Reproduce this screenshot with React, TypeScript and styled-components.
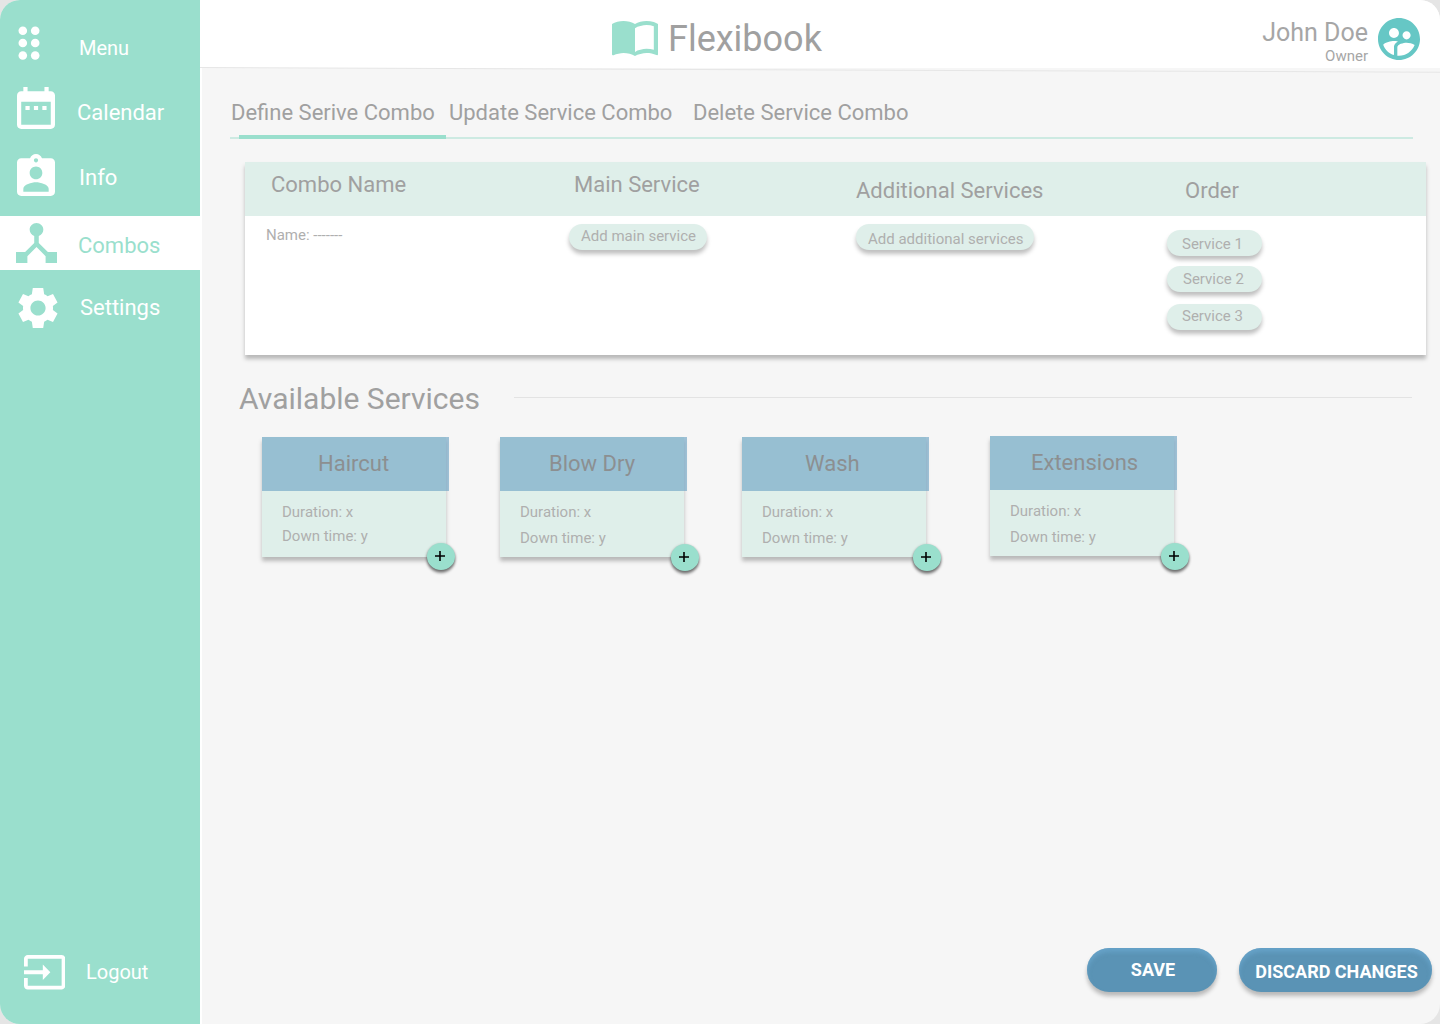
import React from "react";
import styled, { createGlobalStyle } from "styled-components";

const mint = "#9adfcd";
const paleMint = "#dfefea";
const canvas = "#f6f6f6";
const grey = "#a0a0a0";
const softGrey = "#afafaf";
const dropShadow = "0 4px 4px rgba(0, 0, 0, 0.25)";

const GlobalStyle = createGlobalStyle`
  * { box-sizing: border-box; }
  body { margin: 0; background: #e5e5e5; font-family: Roboto, "Liberation Sans", sans-serif; }
`;

const Page = styled.div`
  position: relative;
  display: flex;
  width: 1440px;
  height: 1024px;
  border-radius: 20px;
  overflow: hidden;
  background: ${canvas};
`;

/* Sidebar */

const Sidebar = styled.nav`
  display: flex;
  flex-direction: column;
  flex: none;
  width: 202px;
  background: ${mint};
  border-right: 2px solid #ffffff;
`;

const NavItem = styled.a<{ $height: number; $active?: boolean; $bottom?: boolean }>`
  display: flex;
  align-items: flex-start;
  flex: none;
  height: ${(p) => p.$height}px;
  margin-top: ${(p) => (p.$bottom ? "auto" : "0")};
  color: ${(p) => (p.$active ? mint : "#ffffff")};
  background: ${(p) => (p.$active ? "#ffffff" : "transparent")};
  text-decoration: none;
`;

const NavIconSlot = styled.span<{ $left: number; $top: number; $width: number }>`
  display: block;
  flex: none;
  width: ${(p) => p.$width}px;
  padding: ${(p) => p.$top}px 0 0 ${(p) => p.$left}px;
`;

const NavLabel = styled.span<{ $top: number; $size: number }>`
  margin-top: ${(p) => p.$top}px;
  font-size: ${(p) => p.$size}px;
  line-height: 26px;
`;

const Glyph = styled.svg`
  display: block;
  fill: currentColor;
`;

type IconProps = { width: number; height: number; box: string; d: string };

const Icon = ({ width, height, box, d }: IconProps) => (
  <Glyph width={width} height={height} viewBox={box} preserveAspectRatio="none">
    <path d={d} />
  </Glyph>
);

const DotsIcon = () => (
  <Glyph width={22} height={34} viewBox="0 0 22 34">
    {[4.7, 17, 29.5].map((y) => (
      <React.Fragment key={y}>
        <circle cx={4.8} cy={y} r={4.3} />
        <circle cx={17.2} cy={y} r={4.3} />
      </React.Fragment>
    ))}
  </Glyph>
);

const CalendarIcon = () => (
  <Icon
    width={38}
    height={42}
    box="3 2 18 20"
    d="M9 11H7v2h2v-2zm4 0h-2v2h2v-2zm4 0h-2v2h2v-2zm2-7h-1V2h-2v2H8V2H6v2H5c-1.11 0-1.99.9-1.99 2L3 20c0 1.1.89 2 2 2h14c1.1 0 2-.9 2-2V6c0-1.1-.9-2-2-2zm0 16H5V9h14v11z"
  />
);

const InfoIcon = () => (
  <Icon
    width={38}
    height={42}
    box="3 1 18 20"
    d="M19 3h-4.18C14.4 1.84 13.3 1 12 1c-1.3 0-2.4.84-2.82 2H5c-1.1 0-2 .9-2 2v14c0 1.1.9 2 2 2h14c1.1 0 2-.9 2-2V5c0-1.1-.9-2-2-2zm-7 0c.55 0 1 .45 1 1s-.45 1-1 1-1-.45-1-1 .45-1 1-1zm0 4c1.66 0 3 1.34 3 3s-1.34 3-3 3-3-1.34-3-3 1.34-3 3-3zm6 12H6v-1.4c0-2 4-3.1 6-3.1s6 1.1 6 3.1V19z"
  />
);

const CombosIcon = () => (
  <Icon
    width={41}
    height={40}
    box="3 3 18 18"
    d="M17 16l-4-4V8.82C14.16 8.4 15 7.3 15 6c0-1.66-1.34-3-3-3S9 4.34 9 6c0 1.3.84 2.4 2 2.82V12l-4 4H3v5h5v-3.05l4-4.2 4 4.2V21h5v-5h-4z"
  />
);

const SettingsIcon = () => (
  <Icon
    width={40}
    height={40}
    box="2.4 2.4 19.2 19.2"
    d="M19.14,12.94c0.04-0.3,0.06-0.61,0.06-0.94c0-0.32-0.02-0.64-0.07-0.94l2.25-1.7L19.2,5.3l-2.62,1.05c-0.5-0.38-1.03-0.7-1.62-0.94L14.5,2.4h-5L9.05,5.41C8.46,5.65,7.92,5.97,7.42,6.35L4.8,5.3L2.6,9.36l2.27,1.7C4.82,11.36,4.8,11.69,4.8,12s0.02,0.64,0.07,0.94l-2.27,1.7L4.8,18.7l2.62-1.05c0.5,0.38,1.04,0.7,1.63,0.94L9.5,21.6h5l0.46-3.01c0.59-0.24,1.13-0.56,1.62-0.94l2.62,1.05l2.18-4.06L19.14,12.94z M12,15.65c-2,0-3.65-1.65-3.65-3.65s1.65-3.65,3.65-3.65s3.65,1.65,3.65,3.65S14,15.65,12,15.65z"
  />
);

const LogoutIcon = () => (
  <Icon
    width={41.4}
    height={34.5}
    box="1 3 22 18"
    d="M21 3.01H3c-1.1 0-2 .9-2 2V9h2V4.99h18v14.03H3V15H1v4.01c0 1.1.9 1.98 2 1.98h18c1.1 0 2-.88 2-1.98v-14c0-1.11-.9-2-2-2zM11 16l4-4-4-4v3H1v2h10v3z"
  />
);

const BookIcon = () => (
  <Icon
    width={46}
    height={35}
    box="1 4.5 22 17"
    d="M21 5c-1.11-.35-2.33-.5-3.5-.5-1.95 0-4.05.4-5.5 1.5-1.45-1.1-3.55-1.5-5.5-1.5S2.45 4.9 1 6v14.65c0 .25.25.5.5.5.1 0 .15-.05.25-.05C3.1 20.45 5.05 20 6.5 20c1.95 0 4.05.4 5.5 1.5 1.35-.85 3.8-1.5 5.5-1.5 1.65 0 3.35.3 4.75 1.05.1.05.15.05.25.05.25 0 .5-.25.5-.5V6c-.6-.45-1.25-.75-2-1zm0 13.5c-1.1-.35-2.3-.5-3.5-.5-1.7 0-4.15.65-5.5 1.5V8c1.35-.85 3.8-1.5 5.5-1.5 1.2 0 2.4.15 3.5.5v11.5z"
  />
);

const UserIcon = () => (
  <Icon
    width={42}
    height={42}
    box="1.99 2 20 20"
    d="M11.99 2c-5.52 0-10 4.48-10 10s4.48 10 10 10 10-4.48 10-10-4.48-10-10-10zm3.61 6.34c1.07 0 1.93.86 1.93 1.93 0 1.07-.86 1.93-1.93 1.93-1.07 0-1.93-.86-1.93-1.93-.01-1.07.86-1.93 1.93-1.93zm-6-1.58c1.3 0 2.36 1.06 2.36 2.36 0 1.3-1.06 2.36-2.36 2.36s-2.36-1.06-2.36-2.36c0-1.31 1.05-2.36 2.36-2.36zm0 9.13v3.75c-2.4-.75-4.3-2.6-5.14-4.96 1.05-1.12 3.67-1.69 5.14-1.69.53 0 1.2.08 1.9.22-1.64.87-1.9 2.02-1.9 2.68zM11.99 20c-.27 0-.53-.01-.79-.04v-4.07c0-1.42 2.94-2.13 4.4-2.13 1.07 0 2.92.39 3.84 1.15-1.17 2.97-4.06 5.09-7.45 5.09z"
  />
);

const PlusIcon = () => (
  <Icon width={10} height={10} box="0 0 10 10" d="M4.2 0h1.6v4.2H10v1.6H5.8V10H4.2V5.8H0V4.2h4.2z" />
);

const navItems = [
  { label: "Menu", icon: <DotsIcon />, height: 80, left: 18, top: 26, text: 79, labelTop: 35, size: 20 },
  { label: "Calendar", icon: <CalendarIcon />, height: 66, left: 17, top: 7, text: 77, labelTop: 20, size: 22 },
  { label: "Info", icon: <InfoIcon />, height: 70, left: 17, top: 8, text: 79, labelTop: 19, size: 22 },
  { label: "Combos", icon: <CombosIcon />, height: 54, left: 16, top: 7, text: 78, labelTop: 17, size: 22, active: true },
  { label: "Settings", icon: <SettingsIcon />, height: 70, left: 18, top: 18, text: 80, labelTop: 25, size: 22 },
  { label: "Logout", icon: <LogoutIcon />, height: 84, left: 24, top: 15, text: 86, labelTop: 19, size: 20, bottom: true },
];

/* Header */

const Content = styled.div`
  display: flex;
  flex-direction: column;
  flex: 1;
`;

const Header = styled.header`
  display: flex;
  align-items: flex-start;
  justify-content: space-between;
  flex: none;
  height: 68px;
  padding: 18px 20px 0 410px;
  background: #ffffff;
  color: ${grey};
`;

const HeaderRule = styled.div`
  position: absolute;
  left: 200px;
  top: 67px;
  width: 1241px;
  height: 1px;
  background: #e6e6e6;
  transform: rotate(0.22deg);
  transform-origin: left top;
`;

const Brand = styled.div`
  display: flex;
  gap: 10px;
  padding-top: 3px;
  color: ${mint};
`;

const BrandName = styled.h1`
  margin: -3px 0 0;
  font-size: 36px;
  font-weight: 400;
  line-height: 42px;
  color: ${grey};
`;

const User = styled.div`
  display: flex;
  gap: 10px;
  color: #66c7c5;
`;

const UserText = styled.div`
  display: flex;
  flex-direction: column;
  align-items: flex-end;
  color: #a6a6a6;
`;

const UserName = styled.span`
  font-size: 25px;
  line-height: 29px;
`;

const UserRole = styled.span`
  font-size: 15px;
  line-height: 18px;
`;

/* Tabs */

const Body = styled.main`
  display: flex;
  flex-direction: column;
  flex: 1;
`;

const Tabs = styled.div`
  display: flex;
  margin: 31px 27px 0 28px;
  height: 40px;
  padding-left: 1px;
  border-bottom: 2px solid #cdeae2;
`;

const Tab = styled.div<{ $width: number; $active?: boolean }>`
  position: relative;
  flex: none;
  width: ${(p) => p.$width}px;
  font-size: 22px;
  line-height: 27px;
  white-space: nowrap;
  color: ${grey};

  &::after {
    content: "";
    display: ${(p) => (p.$active ? "block" : "none")};
    position: absolute;
    left: 8px;
    top: 36px;
    width: 207px;
    height: 4px;
    background: ${mint};
  }
`;

/* Combo table */

const Table = styled.section`
  margin: 23px 14px 0 43px;
  height: 193px;
  background: #ffffff;
  box-shadow: ${dropShadow};
`;

const TableRow = styled.div<{ $head?: boolean }>`
  display: grid;
  grid-template-columns: 303px 282px 310px 1fr;
  height: ${(p) => (p.$head ? "54px" : "139px")};
  background: ${(p) => (p.$head ? paleMint : "transparent")};
`;

const HeadCell = styled.div<{ $left: number; $top: number }>`
  padding: ${(p) => p.$top}px 0 0 ${(p) => p.$left}px;
  font-size: 22px;
  line-height: 26px;
  color: ${grey};
`;

const Cell = styled.div<{ $left: number; $top: number }>`
  display: flex;
  flex-direction: column;
  align-items: flex-start;
  padding: ${(p) => p.$top}px 0 0 ${(p) => p.$left}px;
  font-size: 15px;
  line-height: 18px;
  color: ${softGrey};
`;

const Pill = styled.button<{ $width: number; $left: number; $top: number; $gap?: number }>`
  display: block;
  width: ${(p) => p.$width}px;
  height: 26px;
  margin: 0 0 ${(p) => p.$gap ?? 0}px;
  padding: ${(p) => p.$top}px 0 ${(p) => 8 - p.$top}px ${(p) => p.$left}px;
  border: 0;
  border-radius: 13px;
  background: ${paleMint};
  box-shadow: ${dropShadow};
  font: 400 15px/18px Roboto, "Liberation Sans", sans-serif;
  color: ${softGrey};
  text-align: left;
  white-space: nowrap;
`;

/* Services */

const SectionTitle = styled.div`
  display: flex;
  align-items: center;
  height: 36px;
  margin: 25px 28px 0 37px;
`;

const Title = styled.h2`
  width: 275px;
  margin: 0;
  padding-top: 2px;
  font-size: 30px;
  font-weight: 400;
  line-height: 36px;
  color: ${grey};
`;

const Rule = styled.div`
  flex: 1;
  height: 1px;
  margin-top: -1px;
  background: #e3e3e3;
`;

const Cards = styled.div`
  display: flex;
  align-items: flex-start;
  padding: 20px 0 0 60px;
`;

const Card = styled.article<{ $gap: number; $top: number }>`
  position: relative;
  width: 187px;
  height: 120px;
  margin: ${(p) => p.$top}px ${(p) => p.$gap}px 0 0;

  &::before {
    content: "";
    position: absolute;
    inset: 0 3px 0 0;
    background: ${paleMint};
    box-shadow: ${dropShadow};
  }
`;

const CardHead = styled.h3<{ $left: number }>`
  position: relative;
  height: 54px;
  margin: 0;
  padding: 14px 0 0 ${(p) => p.$left}px;
  background: rgba(112, 165, 197, 0.65);
  font-size: 22px;
  font-weight: 400;
  line-height: 26px;
  color: #8c8f91;
`;

const CardBody = styled.div<{ $gap: number }>`
  position: relative;
  display: flex;
  flex-direction: column;
  gap: ${(p) => p.$gap}px;
  padding: 12px 0 0 20px;
  font-size: 15px;
  line-height: 18px;
  color: ${softGrey};
`;

const AddButton = styled.button<{ $left: number; $top: number }>`
  position: absolute;
  left: ${(p) => p.$left}px;
  top: ${(p) => p.$top}px;
  display: flex;
  align-items: center;
  justify-content: center;
  width: 28.5px;
  height: 27px;
  padding: 0 1px 1px 0;
  border: 0;
  border-radius: 50%;
  background: ${mint};
  box-shadow: 0 3px 3px rgba(0, 0, 0, 0.4), 0 1px 3px rgba(0, 0, 0, 0.35);
  color: #000000;
`;

const services = [
  { name: "Haircut", left: 56, top: 1, gap: 51, rowGap: 6, addLeft: 164.7, addTop: 106 },
  { name: "Blow Dry", left: 49, top: 1, gap: 55, rowGap: 8, addLeft: 170.7, addTop: 107 },
  { name: "Wash", left: 63, top: 1, gap: 61, rowGap: 8, addLeft: 170.7, addTop: 107 },
  { name: "Extensions", left: 41, top: 0, gap: 0, rowGap: 8, addLeft: 170.7, addTop: 107 },
];

/* Footer actions */

const Actions = styled.footer`
  display: flex;
  justify-content: flex-end;
  gap: 22px;
  margin-top: auto;
  padding: 0 8px 32px 0;
`;

const ActionButton = styled.button<{ $width: number; $top: number }>`
  width: ${(p) => p.$width}px;
  height: 44px;
  padding: ${(p) => p.$top}px 0 ${(p) => 24 - p.$top}px 2px;
  border: 0;
  border-radius: 22px;
  background: #5a93b5;
  box-shadow: ${dropShadow}, inset 0 4px 4px rgba(110, 172, 212, 0.6);
  font: 700 18px/20px Roboto, "Liberation Sans", sans-serif;
  color: #ffffff;
  white-space: nowrap;
`;

export default function App() {
  return (
    <>
      <GlobalStyle />
      <Page>
        <Sidebar>
          {navItems.map((item) => (
            <NavItem key={item.label} $height={item.height} $active={item.active} $bottom={item.bottom}>
              <NavIconSlot $left={item.left} $top={item.top} $width={item.text}>
                {item.icon}
              </NavIconSlot>
              <NavLabel $top={item.labelTop} $size={item.size}>
                {item.label}
              </NavLabel>
            </NavItem>
          ))}
        </Sidebar>
        <Content>
          <Header>
            <Brand>
              <BookIcon />
              <BrandName>Flexibook</BrandName>
            </Brand>
            <User>
              <UserText>
                <UserName>John Doe</UserName>
                <UserRole>Owner</UserRole>
              </UserText>
              <UserIcon />
            </User>
          </Header>
          <Body>
            <Tabs>
              <Tab $width={218} $active>
                Define Serive Combo
              </Tab>
              <Tab $width={244}>Update Service Combo</Tab>
              <Tab $width={220}>Delete Service Combo</Tab>
            </Tabs>
            <Table>
              <TableRow $head>
                <HeadCell $left={26} $top={10}>Combo Name</HeadCell>
                <HeadCell $left={26} $top={10}>Main Service</HeadCell>
                <HeadCell $left={26} $top={16}>Additional Services</HeadCell>
                <HeadCell $left={45} $top={16}>Order</HeadCell>
              </TableRow>
              <TableRow>
                <Cell $left={21} $top={10}>Name: -------</Cell>
                <Cell $left={20.5} $top={8}>
                  <Pill $width={138.4} $left={12.5} $top={3}>Add main service</Pill>
                </Cell>
                <Cell $left={25.5} $top={8}>
                  <Pill $width={178.4} $left={12.5} $top={6}>Add additional services</Pill>
                </Cell>
                <Cell $left={26.5} $top={14}>
                  <Pill $width={95.4} $left={15.5} $top={5} $gap={10}>Service 1</Pill>
                  <Pill $width={95.4} $left={16.5} $top={4} $gap={12}>Service 2</Pill>
                  <Pill $width={95.4} $left={15.5} $top={3}>Service 3</Pill>
                </Cell>
              </TableRow>
            </Table>
            <SectionTitle>
              <Title>Available Services</Title>
              <Rule />
            </SectionTitle>
            <Cards>
              {services.map((s) => (
                <Card key={s.name} $gap={s.gap} $top={s.top}>
                  <CardHead $left={s.left}>{s.name}</CardHead>
                  <CardBody $gap={s.rowGap}>
                    <span>Duration: x</span>
                    <span>Down time: y</span>
                  </CardBody>
                  <AddButton $left={s.addLeft} $top={s.addTop} aria-label={`Add ${s.name}`}>
                    <PlusIcon />
                  </AddButton>
                </Card>
              ))}
            </Cards>
            <Actions>
              <ActionButton $width={130} $top={12}>SAVE</ActionButton>
              <ActionButton $width={193} $top={14}>DISCARD CHANGES</ActionButton>
            </Actions>
          </Body>
        </Content>
        <HeaderRule />
      </Page>
    </>
  );
}
